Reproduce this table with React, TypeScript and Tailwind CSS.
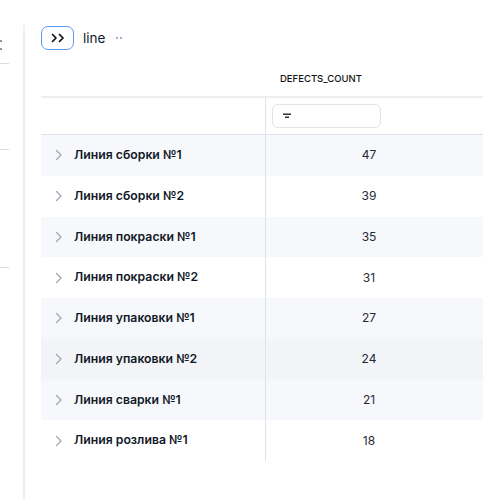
import React from "react";

const rows: { name: string; v: number; bg: string }[] = [
  { name: "Линия сборки №1", v: 47, bg: "bg-[#f7f8fb]" },
  { name: "Линия сборки №2", v: 39, bg: "bg-white" },
  { name: "Линия покраски №1", v: 35, bg: "bg-[#f7f8fb]" },
  { name: "Линия покраски №2", v: 31, bg: "bg-white" },
  { name: "Линия упаковки №1", v: 27, bg: "bg-[#f7f8fb]" },
  { name: "Линия упаковки №2", v: 24, bg: "bg-[#f3f4f7]" },
  { name: "Линия сварки №1", v: 21, bg: "bg-[#f7f8fb]" },
  { name: "Линия розлива №1", v: 18, bg: "bg-white" },
];

function Chevron() {
  return (
    <svg width="8" height="12" viewBox="0 0 8 12" fill="none">
      <path d="M1.5 1.5 L6 6 L1.5 10.5" stroke="#a3a6b4" strokeWidth="1.3" strokeLinecap="round" strokeLinejoin="round" />
    </svg>
  );
}

export default function App() {
  return (
    <div className="flex h-[500px] w-[483px] overflow-hidden bg-white text-[#111827]" style={{ fontFamily: "Inter, 'Noto Sans', sans-serif" }}>
      {/* sidebar */}
      <div className="flex w-[25px] shrink-0">
        <div className="flex w-[23px] flex-col">
          <div className="mt-[40px] flex h-[10px] flex-col justify-between">
            <div className="h-[2px] w-[2px] bg-[#8b93b0]" />
            <div className="h-[2px] w-[2px] bg-[#8b93b0]" />
          </div>
          <div className="mt-[13px] h-px w-[9px] bg-[#d9dce3]" />
          <div className="mt-[85px] h-px w-[9px] bg-[#d9dce3]" />
          <div className="mt-[117px] h-px w-[9px] bg-[#d9dce3]" />
        </div>
        <div className="mt-[25px] w-[2px] bg-[#eceef2]" />
      </div>

      {/* main */}
      <div className="flex min-w-0 flex-1 flex-col pl-[16px] pt-[26px]">
        <div className="flex h-[24px] items-center">
          <div className="flex h-[24px] w-[33px] items-center justify-center rounded-[7px] border border-[#5b9bf0]">
            <svg width="14" height="10" viewBox="0 0 14 10" fill="none">
              <path d="M1.5 1.5 L5 5 L1.5 8.5" stroke="#111" strokeWidth="1.7" strokeLinecap="round" strokeLinejoin="round" />
              <path d="M8.5 1.5 L12 5 L8.5 8.5" stroke="#111" strokeWidth="1.7" strokeLinecap="round" strokeLinejoin="round" />
            </svg>
          </div>
          <span className="ml-[9px] text-[13.5px] text-[#111827]">line</span>
          <div className="ml-[11px] flex gap-[2px]">
            <div className="h-[2px] w-[2px] bg-[#a6adc6]" />
            <div className="h-[2px] w-[2px] bg-[#a6adc6]" />
          </div>
        </div>

        {/* table */}
        <div className="mt-[16px] flex flex-col">
          <div className="flex h-[32px] items-center border-b-2 border-[#eceef2] pb-[4px]">
            <div className="w-[226px] shrink-0" />
            <div className="pl-[13px] text-[9.5px] font-medium text-[#111]">DEFECTS_COUNT</div>
          </div>
          <div className="flex h-[37px] border-b border-[#dfe2e8]">
            <div className="w-[225px] shrink-0 border-r border-[#dfe2e8]" />
            <div className="flex items-center pl-[6px]">
              <div className="flex h-[24px] w-[109px] items-center rounded-[6px] border border-[#dfe2e8] pl-[10px]">
                <svg width="8" height="6" viewBox="0 0 8 6" fill="none">
                  <rect x="0" y="0.5" width="8" height="1.4" fill="#222" />
                  <rect x="2" y="3.5" width="4" height="1.4" fill="#222" />
                </svg>
              </div>
            </div>
          </div>
          {rows.map((r) => (
            <div key={r.name} className={`flex h-[40.75px] ${r.bg}`}>
              <div className="flex w-[225px] shrink-0 items-center border-r border-[#dfe2e8] pl-[14px]">
                <Chevron />
                <span className="ml-[11px] text-[12.25px] font-semibold text-[#111827]">{r.name}</span>
              </div>
              <div className="flex w-[206px] items-center justify-center text-[12px] text-[#1f2937]">{r.v}</div>
            </div>
          ))}
        </div>
      </div>
    </div>
  );
}
